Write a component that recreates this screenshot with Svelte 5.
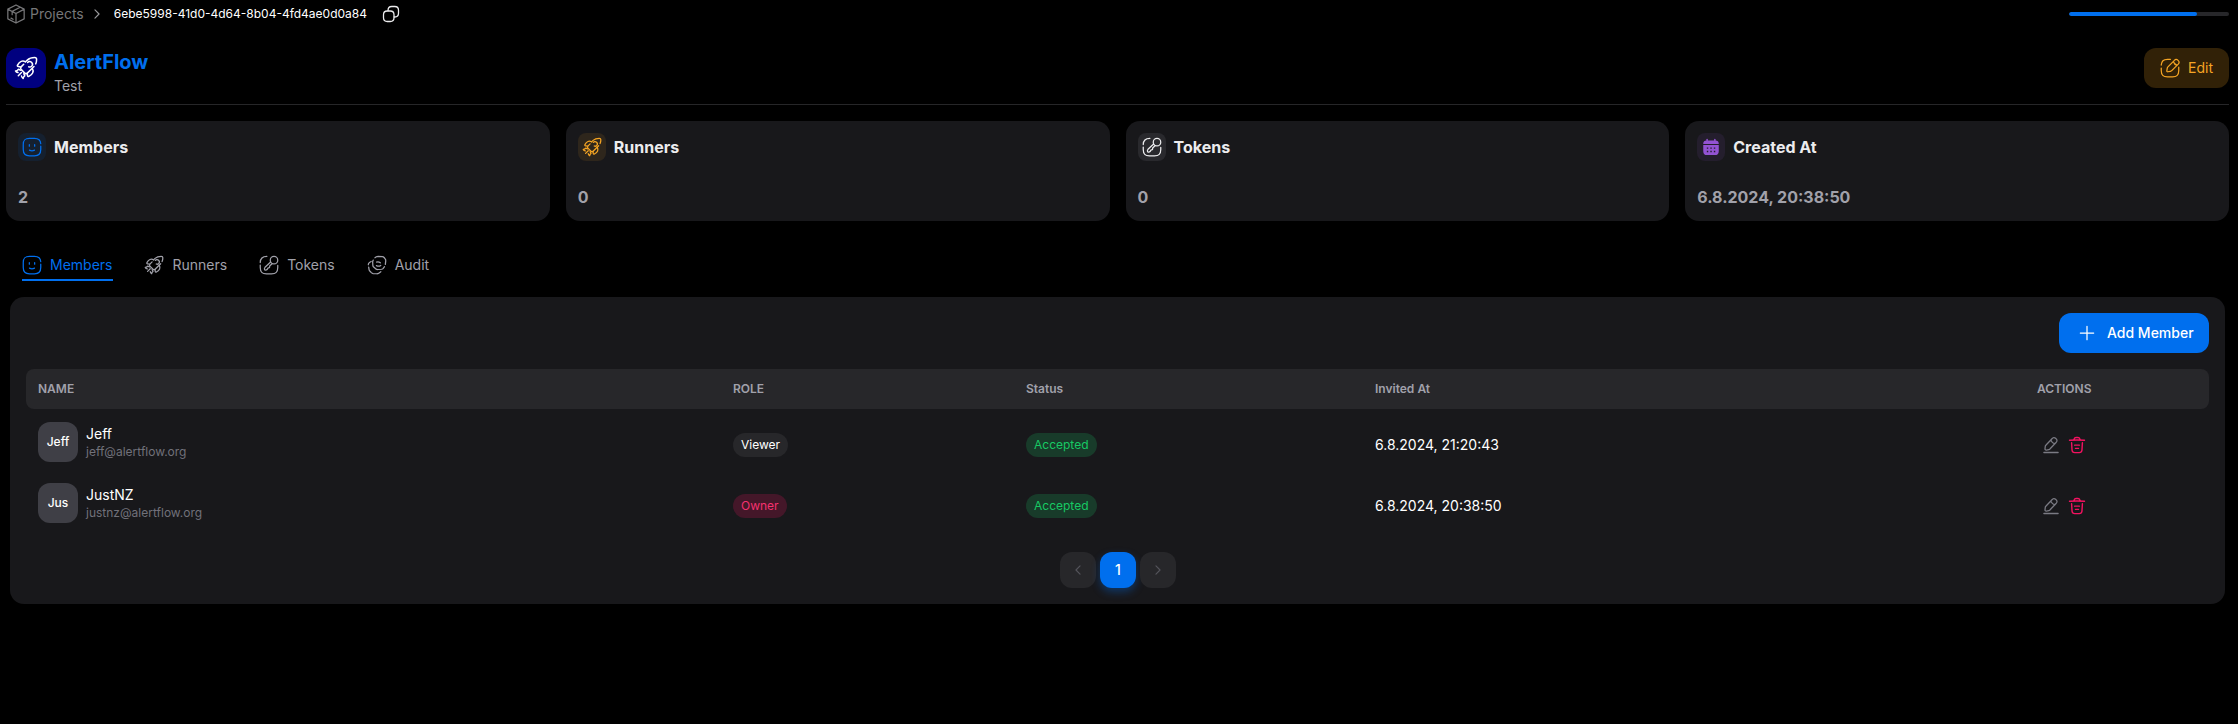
<script>
  const cards = [
    { title: 'Members', value: '2', icon: 'face', tone: 'primary' },
    { title: 'Runners', value: '0', icon: 'rocket', tone: 'warning' },
    { title: 'Tokens', value: '0', icon: 'key', tone: 'default' },
    { title: 'Created At', value: '6.8.2024, 20:38:50', icon: 'calendar', tone: 'secondary' }
  ];
  const tabs = [
    { label: 'Members', icon: 'face', active: true },
    { label: 'Runners', icon: 'rocket' },
    { label: 'Tokens', icon: 'key' },
    { label: 'Audit', icon: 'audit' }
  ];
  const members = [
    { initials: 'Jeff', name: 'Jeff', email: 'jeff@alertflow.org', role: 'Viewer', invited: '6.8.2024, 21:20:43' },
    { initials: 'Jus', name: 'JustNZ', email: 'justnz@alertflow.org', role: 'Owner', invited: '6.8.2024, 20:38:50' }
  ];
</script>

{#snippet icon(name, size = 20, stroke = 1.5)}
  <svg class="icon" width={size} height={size} viewBox="0 0 24 24" fill="none" stroke="currentColor" stroke-width={stroke} stroke-linecap="round" stroke-linejoin="round">
    {#if name === 'face'}
      <path d="M22.500 11V15c0 5-2 7.500-7.500 7.500H9c-5.500 0-7.500-2.500-7.500-7.500V9c0-5.500 2-7.500 7.500-7.500h6c5.500 0 7.300 1.900 7.500 6.500" />
      <path d="M9 15.700c1.800 1 4.200 1 6 0M8.800 9.200v1.800M15.200 9.200v1.800" />
    {:else if name === 'rocket'}
      <path d="M11.500 5.800l1.800-1.700c2-1.900 4.400-2.600 7.400-2.600 1.300 0 1.900.6 1.900 1.900 0 1.700-.3 3.200-.9 4.500M20 10.500l-6.700 6.600c-.8.800-1.700.8-2.500 0l-3.700-3.700c-.8-.8-.8-1.700 0-2.500l2.600-2.600" />
      <path d="M13.600 6.500c1-1.200 2.700-1.300 3.900-.2s1.200 2.800.2 3.900c-.9.900-2 1.100-3 .6" />
      <path d="M11.500 5.800C8.500 4 5.600 5.300 3.500 9.200c-.4.800 0 1.300.8 1.400l2.400.3M18.300 12.400c1.800 3 .5 5.800-3.400 8-.8.400-1.300 0-1.400-.8l-.3-2.400" />
      <path d="M6.700 14.300l-2.400-1c-.6 1-1.200 1.500-2.800 1.600.5 1 1.300 1.500 2.500 1.700M9.800 17.600l1 2.300c-1 .6-1.500 1.200-1.600 2.600-1-.5-1.500-1.300-1.700-2.500M7.500 16.500l-3.200 3.200" />
    {:else if name === 'key'}
      <path d="M9.500 1.500C4 1.500 1.500 3.600 1.500 9M1.500 12v3c0 5.500 2 7.500 7.500 7.500h6c5.500 0 7.500-2 7.500-7.500v-2.500" />
      <circle cx="18" cy="6.200" r="4.500" />
      <path d="M14 8.500L7.200 14.800c-1 1-.9 3.200.2 3.200 1.600.1 3-.6 3.200-2.400 1.700 0 2.400-.8 2.200-2.400L16 10.300" />
    {:else if name === 'calendar'}
      <g stroke="none" fill="currentColor">
        <rect x="6.500" y="2" width="1.700" height="5" rx=".85" />
        <rect x="15.800" y="2" width="1.700" height="5" rx=".85" />
        <path d="M6.500 4.300h11c2.200 0 3.800 1.500 3.800 3.600v.4H2.700v-.4c0-2.100 1.600-3.600 3.800-3.600Z" />
        <path fill-rule="evenodd" d="M2.700 9.700h18.600V17c0 3-1.700 4.700-4.700 4.700H7.400c-3 0-4.700-1.700-4.700-4.700ZM7 12.500v1.700h1.700v-1.700zm4.200 0v1.700h1.700v-1.700zm4.200 0v1.700h1.700v-1.700zM7 16.500v1.700h1.700v-1.700zm4.200 0v1.700h1.700v-1.700zm4.200 0v1.700h1.700v-1.700z" />
      </g>
    {:else if name === 'audit'}
      <path d="M9.500 3.300l1.800-1.200c.6-.4 1.200-.5 2-.5l5 .3c1 .1 1.600.4 2.200 1.100l1.300 1.700c.6.700.8 1.400.7 2.300l-.5 4.300M21 14l-1.500 2c-.6.700-1.200 1-2.100 1.100l-4.400.3c-.9.100-1.600-.1-2.300-.7L8 14.500c-.6-.6-.9-1.200-1-2.100l-.2-4c0-.9.200-1.600.7-2.300" />
      <path d="M5 7.800L3 9c-1 .7-1.500 1.500-1.400 2.700M2 14.500l.5 3c.1.800.5 1.400 1.100 2l1.600 1.700c.7.700 1.300 1 2.200 1.100l4.300.2c.9 0 1.700-.2 2.400-.7l2.500-1.800" />
      <path d="M11.500 8.500c1.700-.8 3.200-.2 4.500.8M11.300 12.700c1.800 1 3.700.9 5.200-.2" />
    {:else if name === 'edit'}
      <path d="M22.500 11v4c0 5.500-2 7.500-7.500 7.500H9c-5.500 0-7.500-2-7.500-7.500v-3M1.500 8.500c.2-5 2.500-7 7.500-7h3.500" />
      <path d="M17.300 2.800L9.500 10.600c-.4.400-.7 1-.8 1.600l-.5 3.300c-.1.600.4 1.100 1 1l3.300-.5c.6-.1 1.200-.4 1.600-.8l7.800-7.800c1.300-1.400 1.500-3-.2-4.600s-3.100-1.400-4.400 0ZM16 4.200c.7 2.300 2.300 4 4.600 4.600" />
    {:else if name === 'box'}
      <path d="M12 1.200l9.800 5v11.600L12 22.800l-9.800-5V6.200ZM2.500 6.400l9.500 5 9.500-5M12 11.400v11M17 3.900L7.400 8.900M7.400 9v3.800M6 17l2.500 1.300" />
    {:else if name === 'copy'}
      <path d="M16 13.200v3.800c0 3.700-1.300 5-5 5H7c-3.700 0-5-1.300-5-5v-4c0-3.700 1.300-5 5-5h4c3.700 0 5 1.300 5 5Z" />
      <path d="M8 7.500C8 3.500 9.300 2 13 2h4c3.700 0 5 1.300 5 5v4c0 3.700-1.300 5-5 5h-.8" />
    {:else if name === 'pen'}
      <path d="M13.300 3.600L5.100 12.300c-.3.300-.6 1-.7 1.400L4 17c-.1 1.200.7 2 1.900 1.800l3.200-.6c.5-.1 1.100-.4 1.400-.8l8.200-8.700c1.400-1.500 2.100-3.200-.2-5.300-2.200-2.100-3.800-1.300-5.200.2ZM12 5c.5 2.700 2.600 4.800 5.400 5.100M2.500 22h19" />
    {:else if name === 'trash'}
      <path d="M2 5.700c6.500-.4 13.500-.4 20 0M8 5.200l.4-1.700C8.700 2.300 9.300 2 10.700 2h2.600c1.400 0 2 .4 2.300 1.500l.4 1.700M19.200 9l-.6 10c-.2 2-.6 3.200-3.600 3.200H9c-3 0-3.400-1.200-3.600-3.200l-.6-10M8.800 12.200h6.400M10 16.500h4" />
    {:else if name === 'plus'}
      <path d="M4 12h16M12 4v16" />
    {:else if name === 'left'}
      <path d="M15.500 19l-7-7 7-7" />
    {:else if name === 'right'}
      <path d="M8.500 19l7-7-7-7" />
    {/if}
  </svg>
{/snippet}

<main>
  <nav class="topbar">
    <span class="crumb">{@render icon('box', 20)}Projects</span>
    <span class="sep">{@render icon('right', 14, 2)}</span>
    <span class="uuid">6ebe5998-41d0-4d64-8b04-4fd4ae0d0a84</span>
    <span class="copy">{@render icon('copy', 18, 1.7)}</span>
    <div class="progress"><div class="bar"></div></div>
  </nav>

  <header>
    <div class="logo">{@render icon('rocket', 24)}</div>
    <div class="heading">
      <h1>AlertFlow</h1>
      <p>Test</p>
    </div>
    <button class="edit">{@render icon('edit', 20)}Edit</button>
  </header>

  <section class="cards">
    {#each cards as c}
      <article class="card">
        <div class="cardhead">
          <span class="badge {c.tone}">{@render icon(c.icon, 20)}</span>
          <h2>{c.title}</h2>
        </div>
        <p>{c.value}</p>
      </article>
    {/each}
  </section>

  <div class="tabs">
    {#each tabs as t}
      <div class="tab" class:active={t.active}>{@render icon(t.icon, 20)}<span>{t.label}</span></div>
    {/each}
  </div>

  <section class="panel">
    <button class="add">{@render icon('plus', 20)}Add Member</button>
    <div class="row thead">
      <span>NAME</span><span>ROLE</span><span>Status</span><span>Invited At</span><span>ACTIONS</span>
    </div>
    <div class="tbody">
      {#each members as m}
        <div class="row">
          <div class="user">
            <span class="avatar">{m.initials}</span>
            <div><div class="name">{m.name}</div><div class="email">{m.email}</div></div>
          </div>
          <div><span class="chip {m.role.toLowerCase()}">{m.role}</span></div>
          <div><span class="chip accepted">Accepted</span></div>
          <div class="date">{m.invited}</div>
          <div class="actions">
            <span class="pen">{@render icon('pen', 18, 1.7)}</span>
            <span class="trash">{@render icon('trash', 18, 1.9)}</span>
          </div>
        </div>
      {/each}
    </div>
    <div class="pages">
      <span class="page off">{@render icon('left', 14, 2)}</span>
      <span class="page on">1</span>
      <span class="page off">{@render icon('right', 14, 2)}</span>
    </div>
  </section>
</main>

<style>
  :global(body) { background: #000; }
  main {
    box-sizing: border-box;
    height: 724px;
    padding: 0 9px 0 6px;
    background: #000;
    color: #ececee;
    font: 14px/20px Inter, sans-serif;
  }
  h1, h2, p { margin: 0; }
  button { border: 0; font: inherit; }
  .icon { display: block; flex: none; }
  .topbar { display: flex; align-items: center; height: 28px; }
  .crumb { display: flex; align-items: center; gap: 4px; color: #767678; }
  .sep { margin-left: 6px; color: #9a9a9d; }
  .uuid { margin-left: 10px; width: 268px; font-size: 12px; line-height: 16px; color: #fff; white-space: nowrap; }
  .copy { color: #ececee; }
  .progress { margin-left: auto; width: 160px; height: 4px; border-radius: 4px; background: #27272a; overflow: hidden; }
  .bar { width: 80%; height: 100%; border-radius: 4px; background: #006fee; }
  header { box-sizing: border-box; display: flex; height: 77px; padding-top: 20px; border-bottom: 1px solid #262628; }
  .logo { display: flex; align-items: center; justify-content: center; width: 40px; height: 40px; border-radius: 12px; background: #00007f; color: #fff; }
  .heading { margin-left: 8px; }
  h1 { font-size: 20px; line-height: 28px; font-weight: 700; color: #006fee; }
  .heading p { color: #a1a1aa; }
  .edit { display: flex; align-items: center; gap: 8px; margin-left: auto; width: 85px; height: 40px; padding: 0 16px; border-radius: 12px; background: #312107; color: #f5a524; }
  .cards { display: grid; grid-template-columns: repeat(4, 1fr); gap: 16px; margin-top: 16px; }
  .card { box-sizing: border-box; height: 100px; padding: 12px; border-radius: 14px; background: #18181b; }
  .cardhead { display: flex; align-items: center; gap: 8px; height: 28px; }
  .badge { display: flex; align-items: center; justify-content: center; width: 28px; height: 28px; border-radius: 8px; }
  .primary { background: #15202f; color: #006fee; }
  .warning { background: #2e261c; color: #f5a524; }
  .default { background: #29292d; color: #ececee; }
  .secondary { background: #241e2d; color: #9353d3; }
  h2 { font-size: 16px; line-height: 24px; font-weight: 700; }
  .card p { margin-top: 24px; font-size: 16px; line-height: 24px; font-weight: 700; color: #a1a1aa; }
  .tabs { display: flex; gap: 8px; height: 32px; margin: 28px 0 16px 4px; }
  .tab { display: flex; align-items: center; gap: 8px; padding: 0 12px; color: #a1a1aa; }
  .tab.active { color: #006fee; background: linear-gradient(#006fee, #006fee) center bottom / 80% 2px no-repeat; }
  .panel { box-sizing: border-box; display: flex; flex-direction: column; height: 307px; margin: 0 4px; padding: 16px; border-radius: 14px; background: #18181b; }
  .add { display: flex; align-items: center; align-self: flex-end; gap: 10px; width: 150px; height: 40px; padding: 0 16px 0 18px; border-radius: 12px; background: #006fee; color: #fff; font-weight: 500; white-space: nowrap; }
  .row { display: grid; grid-template-columns: 695px 293px 349px 662px 1fr; align-items: center; height: 61px; padding: 0 12px; }
  .thead { height: 40px; margin-top: 16px; border-radius: 8px; background: #27272a; color: #a1a1aa; font-size: 12px; font-weight: 600; }
  .tbody { padding-top: 5px; }
  .user { display: flex; align-items: center; gap: 8px; padding-bottom: 5px; }
  .avatar { display: flex; align-items: center; justify-content: center; width: 40px; height: 40px; border-radius: 12px; background: #3f3f46; color: #fff; font-size: 12px; font-weight: 500; }
  .name { line-height: 20px; color: #fff; }
  .email { font-size: 12px; line-height: 16px; color: #71717a; }
  .chip { display: block; width: max-content; padding: 0 8px; border-radius: 12px; font-size: 12px; line-height: 24px; }
  .viewer { background: #27272a; color: #fff; }
  .owner { background: #441729; color: #f5316f; }
  .accepted { background: #183b2a; color: #17c964; }
  .date { color: #fff; }
  .actions { display: flex; gap: 8px; padding-left: 5px; }
  .pen { color: #7a7a83; }
  .trash { color: #f31260; }
  .pages { display: flex; justify-content: center; gap: 4px; margin: 16px 0 0 1px; }
  .page { display: flex; align-items: center; justify-content: center; width: 36px; height: 36px; border-radius: 12px; }
  .off { background: #27272a; color: #54545b; }
  .on { background: #006fee; color: #fff; font-weight: 500; box-shadow: 0 4px 8px rgb(0 111 238 / 35%); }
</style>
